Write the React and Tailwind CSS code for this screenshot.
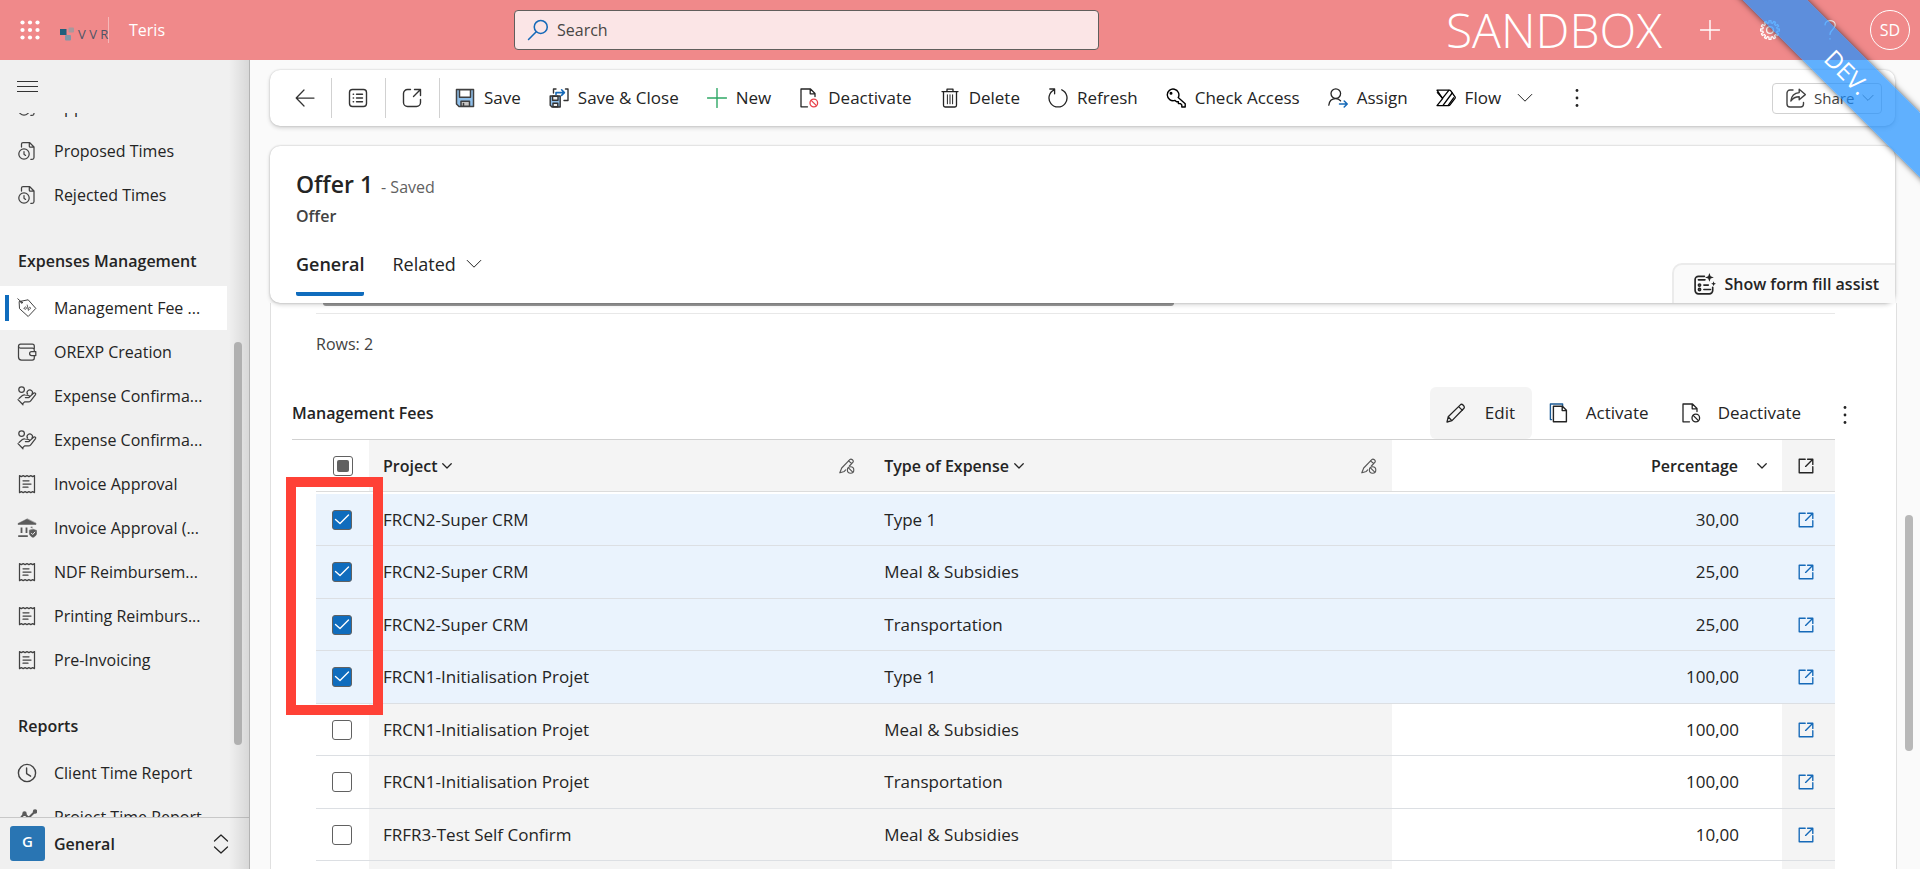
/* App.jsx — Offer form with the management fees grid */
import { useState } from 'react';

const svgBase = { fill: 'none', stroke: 'currentColor', strokeLinecap: 'round', strokeLinejoin: 'round' };

function Icon({ size = 20, width = 1.25, className = '', children }) {
  return (
    <svg viewBox="0 0 20 20" width={size} height={size} strokeWidth={width} className={`shrink-0 ${className}`} aria-hidden="true" {...svgBase}>
      {children}
    </svg>
  );
}

/* ---------- Sidebar icons ---------- */
const TimeDoc = () => (
  <Icon>
    <path d="M4.5 6V3a1.5 1.5 0 0 1 1.5-1.5h6.5L17 6v10.5a1.8 1.8 0 0 1-1.8 1.8h-1.4M12.3 1.8v3.4a1 1 0 0 0 1 1H17" />
    <circle cx="7" cy="13" r="5.2" />
    <path d="M7 10.6v2.6l1.6 1.2" />
  </Icon>
);

const TagIcon = () => (
  <Icon width={1}>
    <path d="M2.5 3.5 11.2 1.8l7.6 8.6-7.6 8.1-8.4-7.6z" />
    <path d="M.8.8 5 4.6" />
    <circle cx="4.6" cy="4.4" r=".8" />
    <path d="M7 10.4c.4-1.8 2.4-2 2.4-.4s-1.8 2-2.2.6M10.2 7l1.2 5.4M11.4 10.2c1-1.8 2.8-.8 2 .6-.4.6-1.2.8-1.8.4" strokeWidth=".8" />
  </Icon>
);

const WalletIcon = () => (
  <Icon>
    <path d="M17.3 6.5V4.2a2 2 0 0 0-2-2H3.5a2 2 0 0 0-2 2V15a3 3 0 0 0 3 3h10.8a2 2 0 0 0 2-2v-2.5M1.6 4.3c0 1 .8 1.8 1.8 1.8h11.9a2 2 0 0 1 2 2v1.2" />
    <path d="M18.8 9.5h-4.2a2 2 0 0 0 0 4h4.2z" />
  </Icon>
);

const HandCoins = () => (
  <Icon>
    <circle cx="4.6" cy="3.6" r="2.8" />
    <path d="M10.6 8.2a2.7 2.7 0 1 1 4.4 0" />
    <path d="M2 12.4 5.4 9.6c.8-.6 1.6-.8 2.6-.6l3.6.5c1.4.2 1.4 2 0 2.1H8.4M11.8 11.5l5-4.4c1-.7 2.5.4 1.7 1.5l-4.8 6.2c-.6.8-1.4 1.1-2.4 1.1H7.6L5.4 18M1 13.6l5 5.2" />
  </Icon>
);

const ReceiptIcon = () => (
  <Icon>
    <path d="M2.5 1.6l1.8 1 1.9-1 1.9 1 1.9-1 1.9 1 1.9-1 1.9 1 1.8-1v17l-1.8-1-1.9 1-1.9-1-1.9 1-1.9-1-1.9 1-1.9-1-1.8 1z" />
    <path d="M6 6.8h6M6 10h8M6 13.2h5" />
  </Icon>
);

const BankShield = () => (
  <Icon className="text-[#5a5a5a]">
    <path d="M10 1 1 5.5v1h18v-1z" fill="currentColor" strokeWidth="0.5" />
    <path d="M4.5 9.5v5.5M9.5 9.5v5.5M14.6 8.8v1M1.2 18.2h9.6" strokeWidth="1.8" strokeLinecap="butt" />
    <path d="m16 11.2 3.6 1.2v2.8c0 2-1.6 3.4-3.6 4.2-2-.8-3.6-2.2-3.6-4.2v-2.8z" fill="currentColor" strokeWidth="0.5" />
    <path d="m14.4 15.2 1.3 1.3 2.2-2.4" stroke="#f0f0f0" strokeWidth="1" />
  </Icon>
);

const ClockIcon = () => (
  <Icon width={1.4}>
    <circle cx="10" cy="10" r="8.6" />
    <path d="M9.6 5v5.6l4 2.6" />
  </Icon>
);

const TrendIcon = () => (
  <Icon width={2} className="text-[#5a5a5a]">
    <path d="m2 13 5.5-6.5 4 4.5L18 4.5" />
    <circle cx="18" cy="4.5" r="1.2" fill="currentColor" />
    <circle cx="7.5" cy="6.5" r="1.2" fill="currentColor" />
  </Icon>
);

/* ---------- Command icons ---------- */
const ChevronDown = ({ size = 16, width = 1.25 }) => (
  <Icon size={size} width={width}>
    <path d="M1.5 5.5 10 14l8.5-8.5" />
  </Icon>
);

const BackIcon = () => (
  <Icon>
    <path d="M9 2 1.2 10 9 18M1.4 10H19" />
  </Icon>
);

const ListIcon = () => (
  <Icon width={1.4}>
    <rect x="1.5" y="1.5" width="17" height="17" rx="3" />
    <path d="M8.5 6.2h6M8.5 10h6M8.5 13.8h6M5.2 6.2h.4M5.2 10h.4M5.2 13.8h.4" />
  </Icon>
);

const PopOutIcon = () => (
  <Icon width={1.4}>
    <path d="M8.5 1.5h-3a4 4 0 0 0-4 4v9a4 4 0 0 0 4 4h9a4 4 0 0 0 4-4v-3M12.5 1.5h6v6M18 2l-6.5 6.5" />
  </Icon>
);

const SaveIcon = () => (
  <Icon width={1.5}>
    <path d="M1.5 1.5h17v17H4L1.5 16z" fill="#8fbfea" stroke="#404040" />
    <path d="M4.5 1.8h11v7.4h-11z" fill="#fff" stroke="#404040" />
    <path d="M6 18.3v-5h8.5v5z" fill="#c8c6c4" stroke="#404040" />
    <path d="M8.5 15.5V18" stroke="#404040" />
  </Icon>
);

const SaveCloseIcon = () => (
  <Icon width={1.4}>
    <path d="M1.2 8h10v11H3l-1.8-1.8z" fill="#8fbfea" stroke="#333" />
    <path d="M3.6 8.2H9v4H3.6zM4 18.8v-3.6h4.8v3.6z" fill="#eee" stroke="#333" />
    <path d="M4.500 5V1H7M16.500 1H19v11.500h-4" stroke="#333" />
    <path d="M7 6.500V4.600h8M12.600 1.800l2.800 2.800-2.800 2.800" stroke="#1569b8" strokeWidth="1.6" />
  </Icon>
);

const PlusIcon = ({ className = '' }) => (
  <Icon width={1.4} className={className}>
    <path d="M10 .5v19M.5 10h19" />
  </Icon>
);

const DocBlocked = ({ mark = 'currentColor' }) => (
  <Icon width={1.3}>
    <path d="M8.5 18.8H2V1h9.5L16 5.500v3M11.200 1.200v4.600h4.600" />
    <circle cx="14.8" cy="15" r="3.8" stroke={mark} />
    <path d="m12.2 12.4 5.2 5.2" stroke={mark} />
  </Icon>
);

const TrashIcon = () => (
  <Icon width={1.3}>
    <path d="M2 3.6h16M7 3.4V1.2h6v2.2M3.5 3.8v13.4c0 1.2.6 1.8 1.6 1.8h9.8c1 0 1.6-.6 1.6-1.8V3.8" />
    <path d="M7.4 6.8v9M10 6.8v9M12.6 6.8v9" strokeWidth="1" />
  </Icon>
);

const RefreshIcon = () => (
  <Icon width={1.3}>
    <path d="M6.2 1.8a9 9 0 1 0 7.6 0M1.8 1h4.8v4.8" />
  </Icon>
);

const KeyIcon = () => (
  <Icon width={1.4} className="text-black">
    <path d="M12.2 9.6a5.8 5.8 0 1 0-3.4 2.8l1.8 1.4h1.8v1.8h2l1.4 1.4v2h3.4v-3.2z" />
    <circle cx="5" cy="5.2" r=".8" fill="currentColor" />
  </Icon>
);

const AssignIcon = () => (
  <Icon width={1.3}>
    <circle cx="7.8" cy="5.6" r="4.8" />
    <path d="M.8 17.2c.4-3.8 3-6.6 6.8-6.6 2.2 0 3.8.8 5 2.2" />
    <path d="M11.5 16h7.6M16.2 13l3 3-3 3" stroke="#1569b8" strokeWidth="1.5" />
  </Icon>
);

const FlowIcon = () => (
  <Icon width={1.3} className="text-black">
    <path d="M1 2.2h12.5q.8 0 1.3.6l4.2 6q.5.8 0 1.5l-5 6.6q-.5.7-1.3.7H1l5.600-7z" />
    <path d="m6.600 10.200 6.200-7.800M7.200 17.200 16.200 5M12.200 17.400l5.400-7.600M1.400 4.600l5 5.400" />
  </Icon>
);

const DotsIcon = () => (
  <svg viewBox="0 0 20 20" width="20" height="20" fill="currentColor" aria-hidden="true">
    <circle cx="10" cy="2.5" r="1.4" />
    <circle cx="10" cy="10" r="1.4" />
    <circle cx="10" cy="17.5" r="1.4" />
  </svg>
);

const ShareIcon = () => (
  <Icon width={1.4}>
    <path d="M7 2H4a3 3 0 0 0-3 3v11a3 3 0 0 0 3 3h10.5a3 3 0 0 0 3-3v-1.5" />
    <path d="M13.2 1.2 19.3 6.6l-6.100 5.200V8.800C9.600 8.800 7 10 4.800 13c.6-4.800 3.600-8 8.400-8.400z" />
  </Icon>
);

const FormAssistIcon = () => (
  <Icon size={22} width={1.5}>
    <path d="M9.5 3H4a3 3 0 0 0-3 3v10a3 3 0 0 0 3 3h10a3 3 0 0 0 3-3v-3" />
    <path d="M4 6.2h6M9 11h4M9 15h6" />
    <circle cx="5" cy="11" r="1" />
    <circle cx="5" cy="15" r="1" />
    <path d="m14 0 1.100 2.900L18 4l-2.900 1.100L14 8l-1.100-2.900L10 4l2.900-1.100zM17.800 7.600l.6 1.600 1.600.6-1.600.6-.6 1.600-.6-1.600-1.600-.6 1.600-.6z" fill="currentColor" stroke="none" />
  </Icon>
);

const PencilIcon = () => (
  <Icon width={1.3}>
    <path d="m1 19 1.2-5.2L14.6 1.6c1.4-1.200 4.600 1.800 3.400 3.600L6 17.600zM12.600 3.600l3.800 3.800M2.400 14l3.400 3.600" />
  </Icon>
);

const PencilLocked = () => (
  <Icon size={16} width={1.4} className="text-[#555]">
    <path d="m1 18.5 2.4-6L13.5 2c1.8-1.8 5.6 1 3.8 3.6L13 10M1.200 18.400l5.400-1.600 1.800-2M11.800 3.600l3.800 3" />
    <circle cx="14.5" cy="15" r="4" />
    <path d="m11.8 12.3 5.4 5.4" />
  </Icon>
);

const CopyDocIcon = () => (
  <Icon width={1.4}>
    <path d="M2.6 16.6H1.4V1h12.2v2" stroke="#1c5a94" />
    <path d="M4.4 3.2h9l4 4v11.6h-13zM13.200 3.400v4.200h4" />
  </Icon>
);

const OpenIcon = () => (
  <Icon size={16} width={1.7}>
    <path d="M9 1.5H1.5v17h17V11M12 1.5h6.500V8M18.200 1.800 9.500 10.500" />
  </Icon>
);

// twelve square teeth round the rim
const gearPath = Array.from({ length: 12 }, (_, i) => {
  const at = (deg, r) => {
    const a = ((i * 30 + deg) * Math.PI) / 180;
    return `${(10 + r * Math.cos(a)).toFixed(2)} ${(10 + r * Math.sin(a)).toFixed(2)}`;
  };
  return `${i ? 'L' : 'M'}${at(-9, 7.2)}L${at(-6, 9.4)}L${at(6, 9.4)}L${at(9, 7.2)}`;
}).join('') + 'Z';

const GearIcon = () => (
  <Icon width={1.3}>
    <circle cx="10" cy="10" r="3.4" />
    <path d={gearPath} />
  </Icon>
);

/* ---------- Data ---------- */
const timeItems = [
  { label: 'Approved Times', icon: TimeDoc },
  { label: 'Proposed Times', icon: TimeDoc },
  { label: 'Rejected Times', icon: TimeDoc },
];

const expenseItems = [
  { label: 'Management Fee ...', icon: TagIcon, active: true },
  { label: 'OREXP Creation', icon: WalletIcon },
  { label: 'Expense Confirma...', icon: HandCoins },
  { label: 'Expense Confirma...', icon: HandCoins },
  { label: 'Invoice Approval', icon: ReceiptIcon },
  { label: 'Invoice Approval (...', icon: BankShield },
  { label: 'NDF Reimbursem...', icon: ReceiptIcon },
  { label: 'Printing Reimburs...', icon: ReceiptIcon },
  { label: 'Pre-Invoicing', icon: ReceiptIcon },
];

const reportItems = [
  { label: 'Client Time Report', icon: ClockIcon },
  { label: 'Project Time Report', icon: TrendIcon },
];

const initialRows = [
  { project: 'FRCN2-Super CRM', type: 'Type 1', pct: '30,00', checked: true },
  { project: 'FRCN2-Super CRM', type: 'Meal & Subsidies', pct: '25,00', checked: true },
  { project: 'FRCN2-Super CRM', type: 'Transportation', pct: '25,00', checked: true },
  { project: 'FRCN1-Initialisation Projet', type: 'Type 1', pct: '100,00', checked: true },
  { project: 'FRCN1-Initialisation Projet', type: 'Meal & Subsidies', pct: '100,00', checked: false },
  { project: 'FRCN1-Initialisation Projet', type: 'Transportation', pct: '100,00', checked: false },
  { project: 'FRFR3-Test Self Confirm', type: 'Meal & Subsidies', pct: '10,00', checked: false },
];

/* ---------- Header ---------- */
function TopBar() {
  return (
    <header className="flex h-[60px] shrink-0 items-center bg-[#f0898a] text-white">
      <div className="flex w-[514px] shrink-0 items-center pl-5">
        <button aria-label="App launcher">
          <svg viewBox="0 0 20 20" width="20" height="20" fill="currentColor">
            {[2.5, 10, 17.5].map(y => [2.5, 10, 17.5].map(x => <circle key={`${x}-${y}`} cx={x} cy={y} r="2.1" />))}
          </svg>
        </button>
        <div className="ml-5 flex h-[26px] w-[49px] items-center gap-1 border-r border-white/40 pt-2">
          <svg viewBox="0 0 14 14" width="14" height="14" className="shrink-0">
            <rect x="0" y="2" width="6.5" height="6" fill="#1f5f7c" />
            <rect x="8.5" y="0.5" width="5.5" height="5" rx="1" fill="#a8989c" />
            <rect x="5" y="8" width="6" height="5.5" rx="1" fill="#7f97a8" />
          </svg>
          <span className="text-[13px] leading-3 font-medium whitespace-nowrap text-[#4d5566]">V V R</span>
        </div>
        <span className="ml-5 text-[16px]">Teris</span>
      </div>
      <label className="flex h-10 w-[585px] items-center gap-2 rounded-sm border border-[#605e5c] bg-[#fbe5e6] px-3">
        <Icon size={22} width={1.4} className="text-[#1569b8]">
          <circle cx="12.5" cy="7.2" r="5.9" />
          <path d="m8.4 11.6-7 7" />
        </Icon>
        <input type="search" aria-label="Search" placeholder="Search" className="w-full bg-transparent text-[16px] outline-none placeholder:text-[#484644]" />
      </label>
      <div className="ml-auto flex items-center pr-[10px]">
        <span className="mr-[38px] text-[48px] leading-[60px] font-light">SANDBOX</span>
        <button aria-label="New record" className="mr-10"><PlusIcon /></button>
        <button aria-label="Settings" className="mr-10"><GearIcon /></button>
        <button aria-label="Help" className="mr-[30px]">
          <Icon width={1.3}>
            <path d="M5 4.8C5.4 2 7.4.6 10 .6c3 0 5.2 1.6 5.200 4.400 0 4.400-5.200 4.600-5.200 9.400M10 18.600v.4" />
          </Icon>
        </button>
        <button aria-label="Account" className="size-10 rounded-full border border-white text-[16px]">SD</button>
      </div>
    </header>
  );
}

/* ---------- Sidebar ---------- */
function NavItem({ label, icon: Glyph, active }) {
  return (
    <li>
      <a href="#" className={`relative flex h-11 w-[227px] items-center gap-[17px] pl-[17px] text-[16px] whitespace-nowrap ${active ? 'bg-white' : ''}`}>
        {active && <span className="absolute top-[9px] left-[5px] h-[26px] w-1 bg-[#0f6cbd]" />}
        <span className="text-[#424242]"><Glyph /></span>
        {label}
      </a>
    </li>
  );
}

function NavHeading({ children }) {
  return <h2 className="flex h-[69px] items-end pb-[13px] pl-[18px] text-[16px] leading-6 font-semibold">{children}</h2>;
}

function Sidebar() {
  return (
    <aside className="relative flex w-[250px] shrink-0 flex-col border-r border-[#b3b3b3] bg-[#f0f0f0]">
      <div className="flex h-[53px] shrink-0 items-center pl-[17px]">
        <button aria-label="Collapse navigation">
          <svg viewBox="0 0 22 14" width="22" height="14" stroke="#333" strokeWidth="1"><path d="M0 1.5h21M0 6.5h21M0 11.5h21" /></svg>
        </button>
      </div>
      <nav className="min-h-0 flex-1 overflow-hidden">
        <ul className="-mt-7">{timeItems.map(i => <NavItem key={i.label} {...i} />)}</ul>
        <NavHeading>Expenses Management</NavHeading>
        <ul>{expenseItems.map((i, n) => <NavItem key={n} {...i} />)}</ul>
        <NavHeading>Reports</NavHeading>
        <ul>{reportItems.map(i => <NavItem key={i.label} {...i} />)}</ul>
      </nav>
      <button className="flex h-[52px] shrink-0 items-center border-t border-[#c8c8c8] pr-[18px] pl-[10px] text-left">
        <span className="flex size-[35px] items-center justify-center rounded-[3px] bg-[#2975b3] pb-1 text-[15px] font-semibold text-white">G</span>
        <span className="ml-[9px] flex-1 text-[16px] font-semibold">General</span>
        <Icon><path d="m3.5 7 6.5-6 6.5 6M3.5 13l6.5 6 6.5-6" /></Icon>
      </button>
      {/* edge shade and scroll thumb */}
      <div className="pointer-events-none absolute inset-y-0 right-0 w-5 bg-linear-to-r from-transparent to-black/10" />
      <div className="absolute top-[282px] right-[7px] h-[403px] w-2 rounded-full bg-[#b0b0b0]" />
    </aside>
  );
}

/* ---------- Command bar ---------- */
function Command({ icon, children }) {
  return (
    <button className="flex items-center gap-[9px] whitespace-nowrap text-[#242424]">
      {icon}
      {children}
    </button>
  );
}

function CommandBar() {
  return (
    <div className="flex h-14 shrink-0 items-center rounded-[10px] bg-white text-[17px] shadow-[0_0_2px_rgba(0,0,0,0.2),0_2px_4px_rgba(0,0,0,0.16)]">
      <div className="flex h-10 divide-x divide-[#d1d1d1] border-r border-[#d1d1d1] pl-2 text-[#333]">
        <button aria-label="Back" className="w-[54px] pl-[17px]"><BackIcon /></button>
        <button aria-label="Show list" className="w-[54px] pl-4"><ListIcon /></button>
        <button aria-label="Open in new window" className="w-[53px] pl-4"><PopOutIcon /></button>
      </div>
      <div className="ml-[15px] flex items-center gap-7">
        <Command icon={<SaveIcon />}>Save</Command>
        <Command icon={<SaveCloseIcon />}>Save &amp; Close</Command>
        <Command icon={<PlusIcon className="text-[#2fa866]" />}>New</Command>
        <Command icon={<DocBlocked mark="#e8424a" />}>Deactivate</Command>
        <Command icon={<TrashIcon />}>Delete</Command>
        <Command icon={<RefreshIcon />}>Refresh</Command>
        <Command icon={<KeyIcon />}>Check Access</Command>
        <Command icon={<AssignIcon />}>Assign</Command>
        <Command icon={<FlowIcon />}>Flow</Command>
      </div>
      <button aria-label="More flow options" className="ml-4"><ChevronDown /></button>
      <button aria-label="More commands" className="ml-[34px]"><DotsIcon /></button>
      <button className="mr-[13px] ml-auto flex h-[31px] w-[110px] items-center gap-2 rounded border border-[#d1d1d1] pl-[13px] text-[15px] text-[#424242]">
        <ShareIcon />
        Share
        <ChevronDown size={12} />
      </button>
    </div>
  );
}

/* ---------- Record header ---------- */
function RecordHeader() {
  return (
    <section className="relative z-10 mt-5 flex h-[157px] shrink-0 justify-between rounded-[10px] bg-white shadow-[0_0_2px_rgba(0,0,0,0.25),0_2px_4px_rgba(0,0,0,0.16)]">
      <div className="pt-5 pl-[26px]">
        <div className="flex items-baseline gap-2">
          <h1 className="text-[23px] leading-9 font-semibold">Offer 1</h1>
          <span className="text-[16px] text-[#616161]">- Saved</span>
        </div>
        <p className="text-[16px] leading-7 font-semibold text-[#424242]">Offer</p>
        <div role="tablist" className="mt-4 flex items-start gap-7 text-[18px] leading-9">
          <button role="tab" aria-selected="true" className="h-[50px] rounded-xs border-b-4 border-[#0f6cbd] pb-[10px] font-semibold">General</button>
          <button role="tab" aria-selected="false" className="flex items-center gap-[10px]">Related <ChevronDown /></button>
        </div>
      </div>
      <button className="mt-auto flex h-[40px] items-center gap-2 rounded-tl-[10px] border-t-2 border-l-2 border-[#ebebeb] bg-[#fafafa] pr-4 pl-5 text-[16px] font-semibold">
        <FormAssistIcon />
        Show form fill assist
      </button>
    </section>
  );
}

/* ---------- Grid ---------- */
function Checkbox({ checked, mixed, onChange, label }) {
  return (
    <span className={`relative block size-5 rounded-[3px] border border-[#616161] ${checked ? 'bg-[#0f6cbd]' : 'bg-white'}`}>
      <input type="checkbox" aria-label={label} checked={checked} onChange={onChange} className="absolute inset-0 size-full appearance-none" />
      {mixed && <span className="pointer-events-none absolute inset-[3px] rounded-xs bg-[#616161]" />}
      {checked && (
        <svg viewBox="0 0 18 18" className="pointer-events-none absolute inset-0 size-full text-white" strokeWidth="1.4" {...svgBase}>
          <path d="m2.5 8.5 4.5 4L15.5 4" />
        </svg>
      )}
    </span>
  );
}

function FeesGrid() {
  const [rows, setRows] = useState(initialRows);
  const selected = rows.filter(r => r.checked).length;
  const all = selected === rows.length;

  const toggle = idx => setRows(rows.map((r, i) => (i === idx ? { ...r, checked: !r.checked } : r)));
  const toggleAll = () => setRows(rows.map(r => ({ ...r, checked: !all })));

  return (
    <div className="relative mr-[61px] ml-[21px] border-t border-[#d1d1d1] pl-6">
      <table className="w-full table-fixed border-separate border-spacing-0 text-left">
        <colgroup>
          <col className="w-[53px]" />
          <col className="w-[33%]" />
          <col />
          <col className="w-[390px]" />
          <col className="w-[53px]" />
        </colgroup>
        <thead className="text-[16px]">
          <tr className="h-[52px]">
            <th className="border-b border-[#dcdcdc] pl-[17px]">
              <Checkbox label="Select all rows" checked={all} mixed={selected > 0 && !all} onChange={toggleAll} />
            </th>
            {['Project', 'Type of Expense'].map(name => (
              <th key={name} className="border-b border-[#dcdcdc] bg-[#f4f4f4] pr-[15px] pl-[14px] font-semibold">
                <div className="flex items-center gap-[5px]">
                  {name}
                  <ChevronDown size={10} width={2.5} />
                  <span className="ml-auto"><PencilLocked /></span>
                </div>
              </th>
            ))}
            <th className="border-b border-[#dcdcdc] pr-[15px] font-semibold">
              <div className="flex items-center justify-end gap-[19px]">
                Percentage
                <ChevronDown size={10} width={2.5} />
              </div>
            </th>
            <th className="border-b border-[#dcdcdc] bg-[#f4f4f4] pl-4"><OpenIcon /></th>
          </tr>
        </thead>
        <tbody className="text-[17px]">
          <tr aria-hidden="true"><td colSpan={5} className="h-[2px] p-0" /></tr>
          {rows.map((r, i) => {
            const on = r.checked;
            const locked = on ? 'bg-[#eaf3fd]' : 'bg-[#f4f4f4]';
            const open = on ? 'bg-[#eaf3fd]' : '';
            return (
              <tr key={i} className="h-[53px] even:h-[52px]">
                <td className={`border-b border-[#dcdfe3] pl-4 ${open}`}>
                  <Checkbox label={`Select ${r.project} ${r.type}`} checked={on} onChange={() => toggle(i)} />
                </td>
                <td className={`border-b border-[#dcdfe3] pl-[14px] ${locked}`}>{r.project}</td>
                <td className={`border-b border-[#dcdfe3] pl-[14px] ${locked}`}>{r.type}</td>
                <td className={`border-b border-[#dcdfe3] pr-[43px] text-right ${open}`}>{r.pct}</td>
                <td className={`border-b border-[#dcdfe3] pl-4 ${locked}`}>
                  <a href="#" aria-label={`Open ${r.project}`} className="block text-[#1569b8]"><OpenIcon /></a>
                </td>
              </tr>
            );
          })}
          <tr aria-hidden="true" className="h-10">
            <td />
            <td className="bg-[#f4f4f4]" />
            <td className="bg-[#f4f4f4]" />
            <td />
            <td className="bg-[#f4f4f4]" />
          </tr>
        </tbody>
      </table>
      {/* highlight around the ticked boxes */}
      <div className="pointer-events-none absolute top-[37px] -left-1.5 h-[238px] w-[97px] border-10 border-[#ff4136]" />
    </div>
  );
}

function FormBody() {
  return (
    <section className="mr-[-2px] min-h-0 flex-1 overflow-hidden border-x border-[#e0e0e0] bg-white">
      <div className="mr-[61px] ml-[45px] border-b border-[#e8e8e8] pb-[7px]">
        <div className="ml-[7px] h-[3px] w-[56%] rounded-b bg-[#999]" />
      </div>
      <p className="mt-[18px] ml-[45px] text-[16px] leading-6 text-[#424242]">Rows: 2</p>
      <div className="mt-[30px] flex h-[53px] items-center pr-[41px] pl-[21px] text-[17px]">
        <h3 className="flex-1 text-[16px] font-semibold">Management Fees</h3>
        <button className="flex h-[52px] w-[102px] items-center gap-[19px] rounded-md bg-[#f4f4f4] pl-4"><PencilIcon />Edit</button>
        <button className="ml-[17px] flex items-center gap-[17px]"><CopyDocIcon />Activate</button>
        <button className="ml-8 flex items-center gap-[17px]"><DocBlocked />Deactivate</button>
        <button aria-label="More grid commands" className="ml-[34px] pt-1"><DotsIcon /></button>
      </div>
      <FeesGrid />
    </section>
  );
}

function DevRibbon() {
  return (
    <div className="pointer-events-none absolute top-0 right-0 z-20 size-[220px] overflow-hidden">
      <div className="absolute top-[49px] right-[-67px] flex h-[46px] w-[280px] rotate-45 items-center justify-center bg-[#1e90ff]/70 text-[24px] text-white shadow-[0_0_6px_rgba(0,0,0,0.6)]">
        DEV.
      </div>
    </div>
  );
}

export default function App() {
  return (
    <div className="relative flex h-screen flex-col overflow-hidden bg-[#fafafa] font-['Open_Sans','Noto_Sans',sans-serif] text-[#242424]">
      <TopBar />
      <div className="flex min-h-0 flex-1">
        <Sidebar />
        <main className="flex min-w-0 flex-1 flex-col pt-[10px] pr-[25px] pl-5">
          <CommandBar />
          <RecordHeader />
          <FormBody />
        </main>
      </div>
      <div className="absolute top-[515px] right-[7px] h-[236px] w-2 rounded-full bg-[#b8b8b8]" />
      <DevRibbon />
    </div>
  );
}
